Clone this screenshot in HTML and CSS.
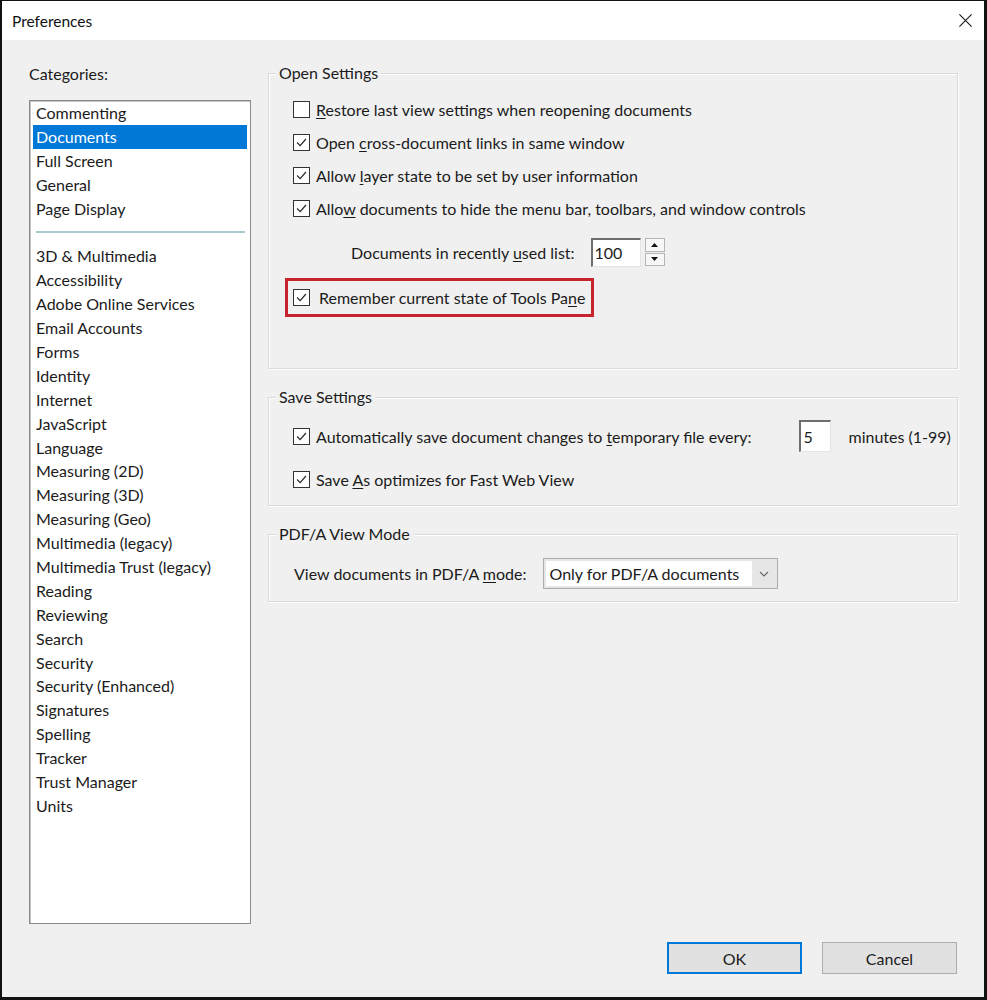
FILE: index.html
```html
<!DOCTYPE html>
<html>
<head>
<meta charset="utf-8">
<link rel="stylesheet" href="styles.css">
</head>
<body>
<div class="dialog">
  <div class="titlebar">
    <span class="title">Preferences</span>
    <svg class="close" width="16" height="16" viewBox="0 0 16 16"><path d="M1.5 1.5 L14.5 14.5 M14.5 1.5 L1.5 14.5" stroke="#1a1a1a" stroke-width="1.2" fill="none"/></svg>
  </div>
  <div class="main">
    <div class="leftcol">
      <div class="catlabel">Categories:</div>
      <div class="list">
        <div class="item">Commenting</div>
        <div class="item selected">Documents</div>
        <div class="item">Full Screen</div>
        <div class="item">General</div>
        <div class="item">Page Display</div>
        <div class="sep"></div>
        <div class="item">3D &amp; Multimedia</div>
        <div class="item">Accessibility</div>
        <div class="item">Adobe Online Services</div>
        <div class="item">Email Accounts</div>
        <div class="item">Forms</div>
        <div class="item">Identity</div>
        <div class="item">Internet</div>
        <div class="item">JavaScript</div>
        <div class="item">Language</div>
        <div class="item">Measuring (2D)</div>
        <div class="item">Measuring (3D)</div>
        <div class="item">Measuring (Geo)</div>
        <div class="item">Multimedia (legacy)</div>
        <div class="item">Multimedia Trust (legacy)</div>
        <div class="item">Reading</div>
        <div class="item">Reviewing</div>
        <div class="item">Search</div>
        <div class="item">Security</div>
        <div class="item">Security (Enhanced)</div>
        <div class="item">Signatures</div>
        <div class="item">Spelling</div>
        <div class="item">Tracker</div>
        <div class="item">Trust Manager</div>
        <div class="item">Units</div>
      </div>
    </div>
    <div class="rightcol">
      <div class="group g-open">
        <span class="legend">Open Settings</span>
        <div class="row cb-row">
          <span class="cb"></span><span><u>R</u>estore last view settings when reopening documents</span>
        </div>
        <div class="row cb-row">
          <span class="cb"><svg viewBox="0 0 17 17"><polyline points="3.5,8.5 7,12 13.5,4.5"/></svg></span><span>Open <u>c</u>ross-document links in same window</span>
        </div>
        <div class="row cb-row">
          <span class="cb"><svg viewBox="0 0 17 17"><polyline points="3.5,8.5 7,12 13.5,4.5"/></svg></span><span>Allow <u>l</u>ayer state to be set by user information</span>
        </div>
        <div class="row cb-row">
          <span class="cb"><svg viewBox="0 0 17 17"><polyline points="3.5,8.5 7,12 13.5,4.5"/></svg></span><span>Allo<u>w</u> documents to hide the menu bar, toolbars, and window controls</span>
        </div>
        <div class="row spin-row">
          <span class="spin-label">Documents in recently <u>u</u>sed list:</span>
          <span class="textbox tb-100">100</span>
          <span class="spin">
            <span class="spin-btn"><svg width="7" height="4" viewBox="0 0 7 4"><polygon points="0,4 7,4 3.5,0" fill="#111"/></svg></span>
            <span class="spin-btn"><svg width="7" height="4" viewBox="0 0 7 4"><polygon points="0,0 7,0 3.5,4" fill="#111"/></svg></span>
          </span>
        </div>
        <div class="redbox">
          <span class="cb"><svg viewBox="0 0 17 17"><polyline points="3.5,8.5 7,12 13.5,4.5"/></svg></span><span class="red-text">Remember current state of Tools Pa<u>n</u>e</span>
        </div>
      </div>

      <div class="group g-save">
        <span class="legend">Save Settings</span>
        <div class="row save-row1">
          <span class="cb"><svg viewBox="0 0 17 17"><polyline points="3.5,8.5 7,12 13.5,4.5"/></svg></span><span>Automatically save document changes to <u>t</u>emporary file every:</span>
          <span class="textbox tb-5">5</span>
          <span class="minutes">minutes (1-99)</span>
        </div>
        <div class="row save-row2">
          <span class="cb"><svg viewBox="0 0 17 17"><polyline points="3.5,8.5 7,12 13.5,4.5"/></svg></span><span>Save <u>A</u>s optimizes for Fast Web View</span>
        </div>
      </div>

      <div class="group g-pdfa">
        <span class="legend">PDF/A View Mode</span>
        <div class="row pdfa-row">
          <span class="pdfa-label">View documents in PDF/A <u>m</u>ode:</span>
          <span class="combo">
            <span class="combo-text">Only for PDF/A documents</span>
            <span class="combo-arrow"><svg width="10" height="6" viewBox="0 0 10 6"><polyline points="1,1 5,5 9,1" fill="none" stroke="#666" stroke-width="1.1"/></svg></span>
          </span>
        </div>
      </div>
    </div>
  </div>
  <div class="footer">
    <button class="btn btn-ok">OK</button>
    <button class="btn">Cancel</button>
  </div>
</div>
</body>
</html>
```

FILE: styles.css
```css
html, body {
  margin: 0;
  padding: 0;
  background: #ffffff;
}
body {
  font-family: "Lato", "Open Sans", sans-serif;
  font-size: 16px;
  color: #1b1b1b;
}
u {
  text-decoration: underline;
  text-underline-offset: 2px;
  text-decoration-thickness: 1px;
}
.dialog {
  width: 987px;
  height: 1000px;
  box-sizing: border-box;
  border: 2px solid #121212;
  border-top-width: 1px;
  border-right-width: 3px;
  border-bottom-width: 3px;
  background: #f0f0f0;
  display: flex;
  flex-direction: column;
}
.titlebar {
  height: 39px;
  background: #ffffff;
  display: flex;
  align-items: center;
  justify-content: space-between;
  padding: 0 11px 0 10px;
  flex: none;
}
.title {
  font-size: 15.5px;
  color: #111;
}
.close {
  width: 15px;
  height: 15px;
}
.main {
  flex: 1;
  display: flex;
  align-items: flex-start;
  padding: 24px 0 0 27px;
  gap: 17px;
}
.leftcol {
  width: 222px;
  flex: none;
}
.catlabel {
  line-height: 20px;
  height: 20px;
}
.list {
  margin-top: 16px;
  height: 824px;
  box-sizing: border-box;
  border: 1px solid #8a8a8a;
  box-shadow: inset 1px 1px 0 #c4c4c4;
  background: #ffffff;
  padding: 0 3px 0 3px;
}
.item {
  height: 23.9px;
  line-height: 23.9px;
  padding-left: 3px;
  white-space: nowrap;
  color: #1b1b1b;
}
.item.selected {
  background: #0078d7;
  color: #ffffff;
}
.sep {
  height: 24px;
  display: flex;
  align-items: center;
  padding: 0 2px 0 3px;
}
.sep::before {
  content: "";
  display: block;
  width: 100%;
  height: 2px;
  background: #a9c9cf;
}
.rightcol {
  width: 690px;
  flex: none;
  margin-top: 9px;
  display: flex;
  flex-direction: column;
}
.group {
  position: relative;
  border: 1px solid #d9d9d9;
  box-shadow: inset 1px 1px 0 #ffffff, 1px 1px 0 #ffffff;
  padding-left: 24px;
}
.legend {
  position: absolute;
  left: 7px;
  top: -11px;
  padding: 0 3px;
  background: #f0f0f0;
  line-height: 20px;
  color: #1b1b1b;
}
.row {
  display: flex;
  align-items: center;
  white-space: nowrap;
}
.cb {
  width: 17px;
  height: 17px;
  box-sizing: border-box;
  border: 1px solid #333333;
  background: #ffffff;
  flex: none;
  margin-right: 6px;
  display: flex;
}
.cb svg {
  width: 15px;
  height: 15px;
}
.cb polyline {
  fill: none;
  stroke: #2a2a2a;
  stroke-width: 1.4;
}
.g-open {
  padding-top: 19px;
  padding-bottom: 51px;
}
.cb-row {
  height: 33px;
}
.spin-row {
  height: 32px;
  margin-top: 11px;
  padding-left: 58px;
}
.spin-label {
  margin-right: 16px;
}
.textbox {
  box-sizing: border-box;
  background: #ffffff;
  border-style: solid;
  border-color: #6e6e6e #e3e3e3 #e3e3e3 #6e6e6e;
  border-width: 2px 1px 1px 2px;
  display: flex;
  align-items: center;
  padding-left: 2px;
}
.tb-100 {
  width: 50px;
  height: 29px;
}
.spin {
  margin-left: 4px;
  width: 20px;
  height: 28px;
  display: flex;
  flex-direction: column;
  gap: 1px;
}
.spin-btn {
  flex: 1;
  box-sizing: border-box;
  border: 1px solid #b5b5b5;
  background: #f7f7f7;
  display: flex;
  align-items: center;
  justify-content: center;
}
.redbox {
  margin-top: 10px;
  margin-left: -8px;
  width: 309px;
  height: 39px;
  box-sizing: border-box;
  border: 3px solid #c8242f;
  display: flex;
  align-items: center;
  padding-left: 5px;
  white-space: nowrap;
}
.redbox .cb {
  margin-right: 9px;
}
.g-save {
  margin-top: 28px;
  padding-top: 22px;
  padding-bottom: 10px;
}
.save-row1 {
  height: 32px;
}
.tb-5 {
  width: 32px;
  height: 32px;
  margin-left: 48px;
}
.minutes {
  margin-left: 17px;
}
.save-row2 {
  height: 32px;
  margin-top: 11px;
}
.g-pdfa {
  margin-top: 28px;
  padding-top: 23px;
  padding-bottom: 12px;
}
.pdfa-row {
  height: 31px;
  padding-left: 1px;
}
.pdfa-label {
  margin-right: 16px;
}
.combo {
  width: 235px;
  height: 31px;
  box-sizing: border-box;
  border: 1px solid #adadad;
  background: #e6e6e6;
  display: flex;
  align-items: stretch;
}
.combo-text {
  flex: 1;
  background: #ffffff;
  margin: 2px 0 2px 2px;
  display: flex;
  align-items: center;
  padding-left: 4px;
}
.combo-arrow {
  width: 25px;
  display: flex;
  align-items: center;
  justify-content: center;
}
.footer {
  flex: none;
  display: flex;
  justify-content: flex-end;
  gap: 20px;
  padding: 0 27px 23px 0;
}
.btn {
  width: 135px;
  height: 32px;
  box-sizing: border-box;
  font-family: inherit;
  font-size: 16px;
  color: #1b1b1b;
  background: #e1e1e1;
  border: 1px solid #adadad;
  margin: 0;
  padding: 0;
}
.btn-ok {
  border: 2px solid #0078d7;
}
```
